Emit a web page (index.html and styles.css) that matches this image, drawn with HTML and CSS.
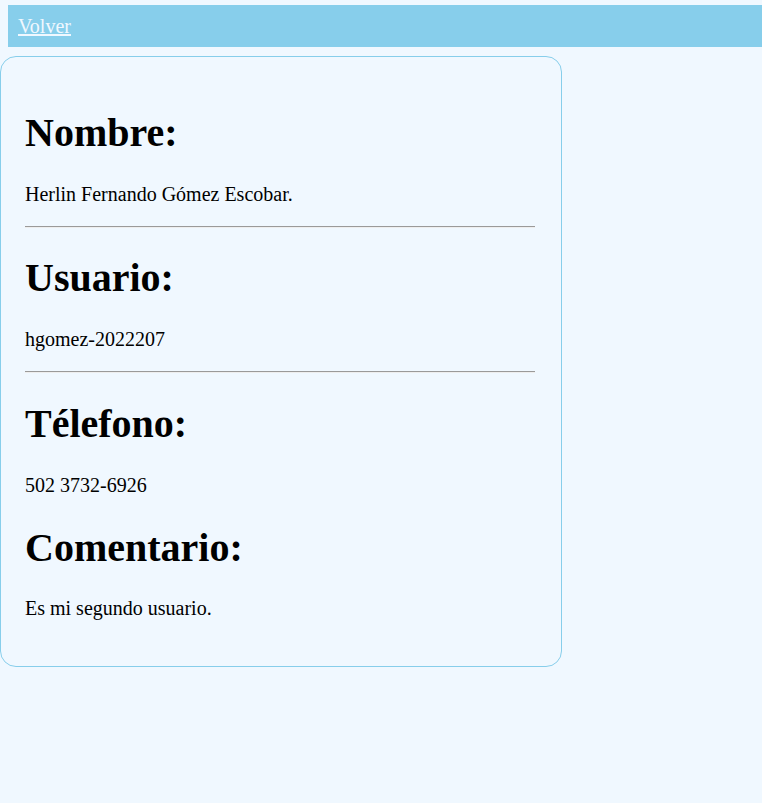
FILE: index.html
```html
<!DOCTYPE html>
<html lang="es">
<head>
<meta charset="utf-8">
<title>Usuario</title>
<link rel="stylesheet" href="styles.css">
</head>
<body>
<nav class="bar"><a class="back" href="#">Volver</a></nav>
<main class="card">
  <h1 class="label">Nombre:</h1>
  <p class="value">Herlin Fernando Gómez Escobar.</p>
  <hr class="sep">
  <h1 class="label">Usuario:</h1>
  <p class="value">hgomez-2022207</p>
  <hr class="sep">
  <h1 class="label">Télefono:</h1>
  <p class="value">502 3732-6926</p>
  <h1 class="label">Comentario:</h1>
  <p class="value">Es mi segundo usuario.</p>
</main>
</body>
</html>
```
FILE: styles.css
```css
html, body {
  background: #f0f8ff;
}
body {
  margin: 0;
  font-family: "Liberation Serif", "Times New Roman", serif;
  font-size: 20px;
  color: #000;
  overflow-x: hidden;
}
.bar {
  margin: 5px 0 0 8px;
  width: 100%;
  box-sizing: border-box;
  background: #87ceeb;
  padding: 10px;
  font-size: 20px;
  line-height: 22px;
}
.back {
  color: #f0f8ff;
  text-decoration: underline;
}
.card {
  display: block;
  margin-top: 9px;
  width: 510px;
  padding: 25px 26px 26px 24px;
  border: 1px solid #87ceeb;
  border-radius: 16px;
}
.label {
  font-size: 40px;
  font-weight: bold;
  margin: 26.8px 0;
}
.value {
  margin: 20px 0;
}
.sep {
  margin: 10px 0;
  border: 0;
  border-top: 1px solid #9a9a9a;
  border-bottom: 1px solid #eeeeee;
  height: 0;
}
```
